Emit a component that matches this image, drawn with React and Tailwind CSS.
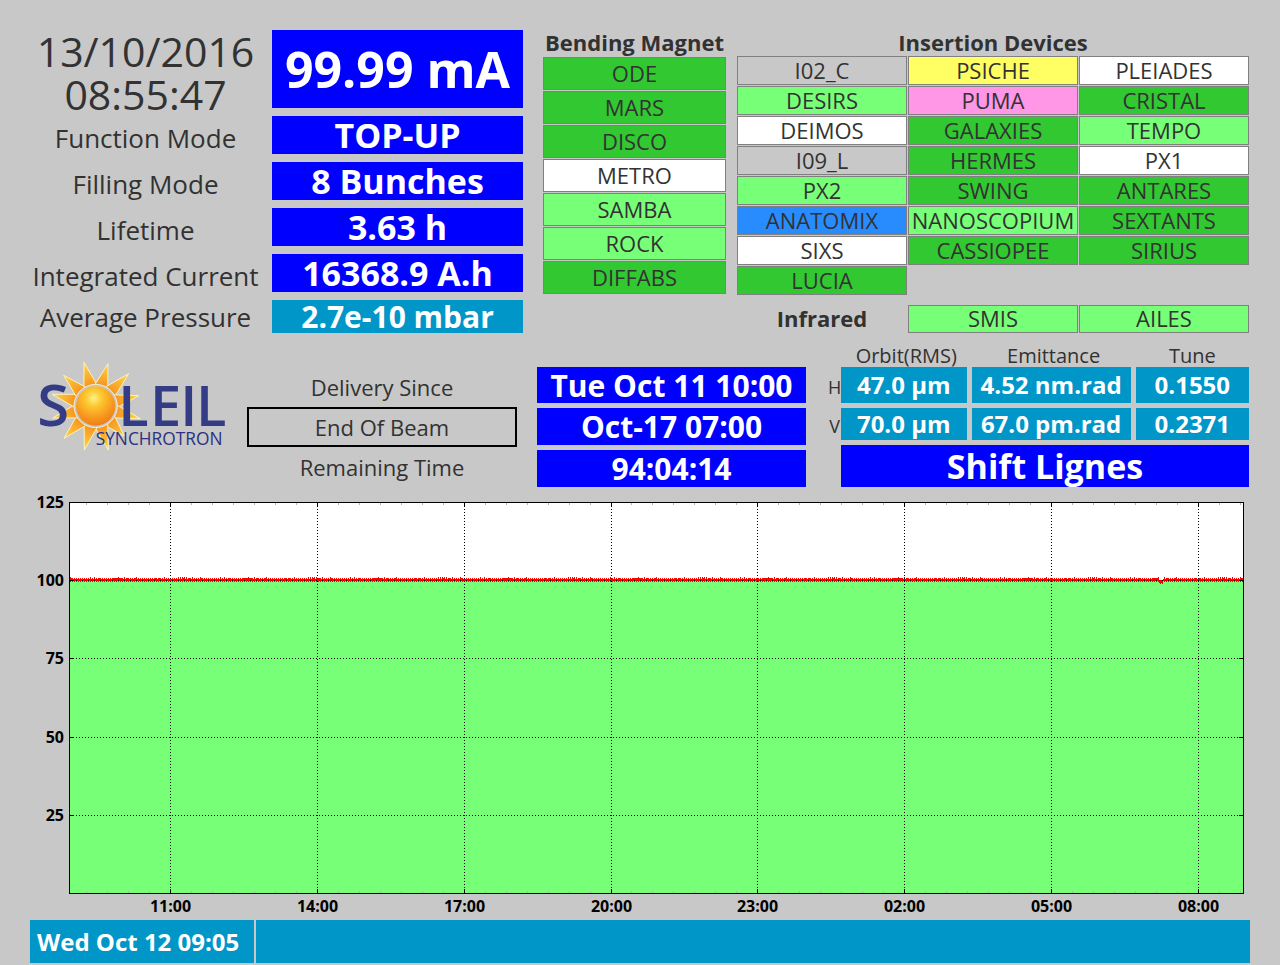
const statusColors = {
    open: 'bg-[#32c832]',
    ready: 'bg-[#78ff78]',
    closed: 'bg-white',
    off: 'bg-[#c8c8c8]',
    test: 'bg-[#ffff64]',
    fault: 'bg-[#ff96e6]',
    setup: 'bg-[#288cff]',
};

const machineValues = [
    { label: 'Function Mode', value: 'TOP-UP' },
    { label: 'Filling Mode', value: '8 Bunches' },
    { label: 'Lifetime', value: '3.63 h' },
    { label: 'Integrated Current', value: '16368.9 A.h' },
];

const bendingMagnets = [
    { name: 'ODE', status: 'open' },
    { name: 'MARS', status: 'open' },
    { name: 'DISCO', status: 'open' },
    { name: 'METRO', status: 'closed' },
    { name: 'SAMBA', status: 'ready' },
    { name: 'ROCK', status: 'ready' },
    { name: 'DIFFABS', status: 'open' },
];

const insertionDevices = [
    { name: 'I02_C', status: 'off' },
    { name: 'PSICHE', status: 'test' },
    { name: 'PLEIADES', status: 'closed' },
    { name: 'DESIRS', status: 'ready' },
    { name: 'PUMA', status: 'fault' },
    { name: 'CRISTAL', status: 'open' },
    { name: 'DEIMOS', status: 'closed' },
    { name: 'GALAXIES', status: 'open' },
    { name: 'TEMPO', status: 'ready' },
    { name: 'I09_L', status: 'off' },
    { name: 'HERMES', status: 'open' },
    { name: 'PX1', status: 'closed' },
    { name: 'PX2', status: 'ready' },
    { name: 'SWING', status: 'open' },
    { name: 'ANTARES', status: 'open' },
    { name: 'ANATOMIX', status: 'setup' },
    { name: 'NANOSCOPIUM', status: 'ready' },
    { name: 'SEXTANTS', status: 'open' },
    { name: 'SIXS', status: 'closed' },
    { name: 'CASSIOPEE', status: 'open' },
    { name: 'SIRIUS', status: 'open' },
    { name: 'LUCIA', status: 'open' },
];

const beamQuality = [
    { plane: 'H', orbit: '47.0 µm', emittance: '4.52 nm.rad', tune: '0.1550', height: 'h-9' },
    { plane: 'V', orbit: '70.0 µm', emittance: '67.0 pm.rad', tune: '0.2371', height: 'h-8' },
];

const Beamline = ({ name, status, height }) => (
    <div className={`${height} ${statusColors[status]} flex items-center justify-center border border-[#808080] pb-[2px] text-[22px] leading-6`}>
        {name}
    </div>
);

const Value = ({ className, children }) => (
    <div className={`flex items-center justify-center font-bold text-white whitespace-nowrap ${className}`}>
        {children}
    </div>
);

const MachineStatus = () => (
    <section className="grid grid-cols-[231fr_251fr] gap-x-[11px] gap-y-2 text-center whitespace-nowrap">
        <div className="h-[78px] text-[41px] leading-[43px]">
            <div>13/10/2016</div>
            <div>08:55:47</div>
        </div>
        <Value className="h-[78px] bg-[#0000ff] text-[50px]">99.99 mA</Value>
        {machineValues.map((item) => (
            <div key={item.label} className="contents">
                <div className="pt-1.5 flex items-center justify-center text-[26px] leading-8">{item.label}</div>
                <Value className="h-[38px] bg-[#0000ff] text-[34px] leading-9">{item.value}</Value>
            </div>
        ))}
        <div className="flex items-center justify-center text-[26px] leading-8">Average Pressure</div>
        <Value className="h-[33px] bg-[#0096c8] text-[30px] leading-8">2.7e-10 mbar</Value>
    </section>
);

const Beamlines = () => (
    <section className="grid grid-cols-[183fr_512fr] gap-x-[11px]">
        <div>
            <h2 className="h-[27px] pb-[2px] flex items-center justify-center text-[22px] font-bold whitespace-nowrap">Bending Magnet</h2>
            <div className="grid gap-px">
                {bendingMagnets.map((line) => (
                    <Beamline key={line.name} {...line} height="h-[33px]" />
                ))}
            </div>
        </div>
        <div>
            <h2 className="h-[26px] pb-[2px] flex items-center justify-center text-[22px] font-bold">Insertion Devices</h2>
            <div className="grid grid-cols-3 gap-px">
                {insertionDevices.map((line) => (
                    <Beamline key={line.name} {...line} height="h-[29px]" />
                ))}
            </div>
            <div className="mt-[10px] grid grid-cols-3 gap-px">
                <h2 className="pb-[2px] flex items-center justify-center text-[22px] leading-6 font-bold">Infrared</h2>
                <Beamline name="SMIS" status="ready" height="h-7" />
                <Beamline name="AILES" status="ready" height="h-7" />
            </div>
        </div>
    </section>
);

const sunRays = [
    [177, 37], [249, 41], [311, 71], [341, 137], [346, 206], [298, 258],
    [250, 300], [178, 300], [117, 265], [83, 204], [82, 133], [116, 76],
];

const rayPoints = ([x, y]) => {
    const angle = Math.atan2(y - 168, x - 212);
    const corner = (a) => `${212 + 66 * Math.cos(a)},${168 + 66 * Math.sin(a)}`;
    return `${x},${y} ${corner(angle - 0.3)} 212,168 ${corner(angle + 0.3)}`;
};

const Logo = () => (
    <svg viewBox="15 0 651 330" className="w-full font-['Open_Sans',sans-serif]" role="img" aria-label="Soleil Synchrotron">
        <defs>
            <radialGradient id="ray" gradientUnits="userSpaceOnUse" cx="212" cy="168" r="138">
                <stop offset="0.45" stopColor="#f7941d" />
                <stop offset="1" stopColor="#ffd84a" />
            </radialGradient>
            <radialGradient id="ball" cx="0.45" cy="0.3" r="0.7">
                <stop offset="0" stopColor="#fff08a" />
                <stop offset="0.3" stopColor="#fdc82f" />
                <stop offset="0.75" stopColor="#f7941d" />
                <stop offset="1" stopColor="#ee7f1a" />
            </radialGradient>
        </defs>
        {sunRays.map((tip) => (
            <polygon key={tip.join()} points={rayPoints(tip)} fill="url(#ray)" stroke="#fff3b8" strokeWidth="3" />
        ))}
        <circle cx="212" cy="168" r="65" fill="#c8c8c8" stroke="#f4ead0" strokeWidth="3" />
        <circle cx="212" cy="168" r="59" fill="url(#ball)" />
        <g fill="#343c86" fontSize="168" fontWeight="600">
            <text x="37" y="229" fontSize="174">S</text>
            <text x="280 375 466 513" y="228">LEIL</text>
        </g>
        <text x="212" y="285" fill="#2b3180" fontSize="52" fontWeight="500">SYNCHROTRON</text>
    </svg>
);

const BeamQuality = () => (
    <div>
        <table className="w-full table-fixed text-center whitespace-nowrap">
            <colgroup>
                <col className="w-[13px]" />
                <col className="w-[31%]" />
                <col className="w-[39%]" />
                <col />
            </colgroup>
            <thead>
                <tr className="h-[22px] text-[20px] leading-5">
                    <td />
                    <th scope="col" className="p-0 font-normal">Orbit(RMS)</th>
                    <th scope="col" className="p-0 font-normal">Emittance</th>
                    <th scope="col" className="p-0 font-normal">Tune</th>
                </tr>
            </thead>
            <tbody>
                {beamQuality.map((row) => (
                    <tr key={row.plane}>
                        <th scope="row" className="p-0 text-[18px] font-normal">{row.plane}</th>
                        <td className="p-0 pr-[5px] pb-[5px]">
                            <Value className={`${row.height} bg-[#0096c8] text-[24px]`}>{row.orbit}</Value>
                        </td>
                        <td className="p-0 pr-[5px] pb-[5px]">
                            <Value className={`${row.height} bg-[#0096c8] text-[24px]`}>{row.emittance}</Value>
                        </td>
                        <td className="p-0 pb-[5px]">
                            <Value className={`${row.height} bg-[#0096c8] text-[24px]`}>{row.tune}</Value>
                        </td>
                    </tr>
                ))}
            </tbody>
        </table>
        <Value className="ml-[13px] h-[42px] bg-[#0000ff] text-[34px]">Shift Lignes</Value>
    </div>
);

const Delivery = () => (
    <section className="mt-3 pr-px grid grid-cols-[217fr_270fr_20fr_269fr_22fr_421fr] items-end">
        <div className="self-start pt-[5px]">
            <Logo />
        </div>
        <div className="grid grid-rows-3 text-center text-[22px]">
            <div className="h-10 leading-10">Delivery Since</div>
            <div className="h-10 border-2 border-black leading-9">End Of Beam</div>
            <div className="h-10 leading-10">Remaining Time</div>
        </div>
        <div />
        <div className="grid gap-[5px]">
            <Value className="h-9 bg-[#0000ff] text-[30px]">Tue Oct 11 10:00</Value>
            <Value className="h-[37px] bg-[#0000ff] text-[30px]">Oct-17 07:00</Value>
            <Value className="h-[37px] bg-[#0000ff] text-[30px]">94:04:14</Value>
        </div>
        <div />
        <BeamQuality />
    </section>
);

const hours = ['11:00', '14:00', '17:00', '20:00', '23:00', '02:00', '05:00', '08:00'];
const hourX = (i) => Math.round(140 + i * 146.86) + 0.5;
const levels = [
    { label: '125', y: 15.5 },
    { label: '100', y: 93.5 },
    { label: '75', y: 171.5 },
    { label: '50', y: 250.5 },
    { label: '25', y: 328.5 },
];
const minorTicks = Array.from({ length: 56 }, (_, i) => Math.round(56 + i * 20.98) + 0.5);

// Top-up current stays within a pixel of 100 mA, with one short dip near 07:10
const currentTrace = Array.from({ length: 1174 }, (_, i) => {
    const noise = (i * 7919 + ((i * i) % 13) * 31) % 5;
    const dip = i > 1088 && i < 1093 ? 2 : 0;
    const top = (i % 2 ? 92 : 91) + (noise === 0 ? -1 : 0) + dip;
    const bottom = (i % 2 ? 94 : 95) + dip;
    return `M${i + 40}.5 ${top}V${bottom}`;
}).join('');

const CurrentChart = () => (
    <svg viewBox="0 0 1220 433" className="block w-full font-['Open_Sans',sans-serif]" role="img" aria-label="Beam current over 24 hours">
        <rect x="39.5" y="15.5" width="1174" height="391" fill="#ffffff" />
        <rect x="39.5" y="94" width="1174" height="312" fill="#78ff78" />
        {minorTicks.map((x) => (
            <path key={x} d={`M${x} 16v2M${x} 404v2`} stroke="#b4b4b4" />
        ))}
        <path d={currentTrace} stroke="#ff0000" fill="none" />
        {levels.slice(1).map((level) => (
            <g key={level.label} stroke="#000000">
                <path d={`M40 ${level.y}H1213`} strokeDasharray="1 2" />
                <path d={`M40 ${level.y}h4M1209 ${level.y}h4`} />
            </g>
        ))}
        {hours.map((hour, i) => (
            <g key={hour}>
                <path d={`M${hourX(i)} 16V406`} stroke="#000000" strokeDasharray="1 2" />
                <path d={`M${hourX(i)} 16v4M${hourX(i)} 402v4`} stroke="#000000" />
                <text x={hourX(i)} y="425" textAnchor="middle" fontSize="16" fontWeight="700">{hour}</text>
            </g>
        ))}
        {levels.map((level) => (
            <text key={level.label} x="34" y={level.y + 5} textAnchor="end" fontSize="16" fontWeight="700">{level.label}</text>
        ))}
        <rect x="39.5" y="15.5" width="1174" height="391" fill="none" stroke="#000000" />
    </svg>
);

const App = () => {
    return (
        <main className="min-h-screen bg-[#c8c8c8] px-[30px] pt-[30px] pb-[2px] text-[#323232] font-['Open_Sans',sans-serif]">
            <div className="pr-px grid grid-cols-[493fr_706fr] gap-5">
                <MachineStatus />
                <Beamlines />
            </div>
            <Delivery />
            <div className="text-black">
                <CurrentChart />
            </div>
            <footer className="grid grid-cols-[224fr_994fr] gap-[2px] text-[24px] font-bold text-white">
                <div className="h-[43px] bg-[#0096c8] px-[7px] leading-[43px] whitespace-nowrap">Wed Oct 12 09:05</div>
                <div className="h-[43px] bg-[#0096c8]" />
            </footer>
        </main>
    );
};

export default App;
